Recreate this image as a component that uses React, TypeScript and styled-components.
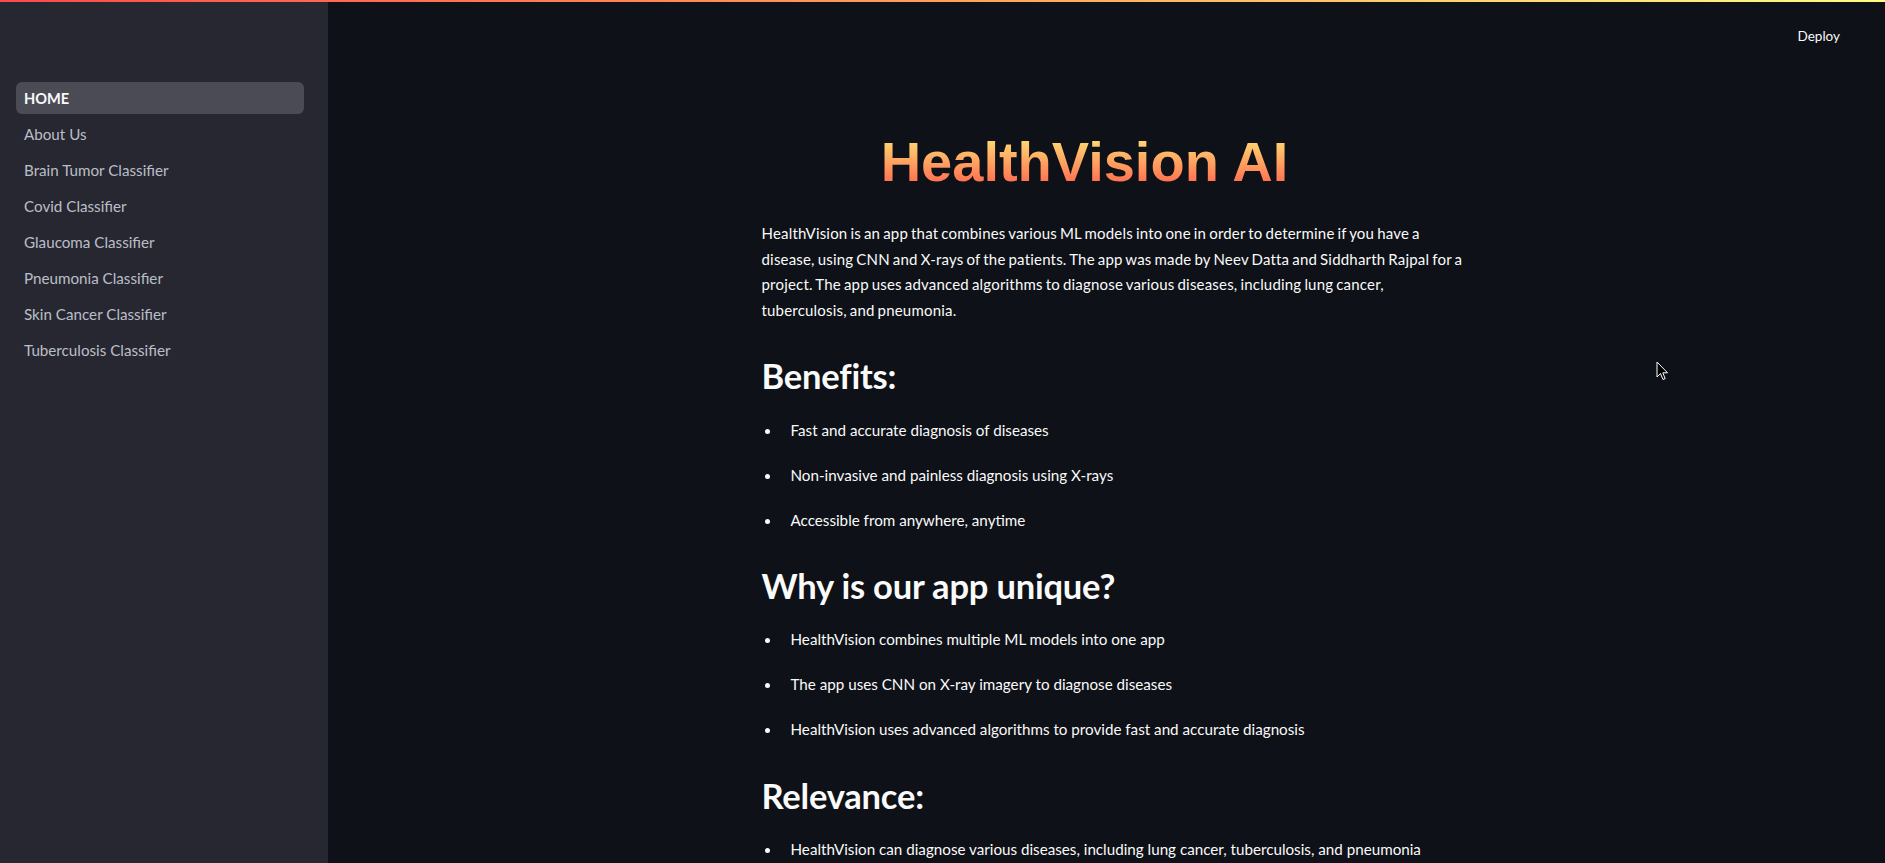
import React from "react";
import styled, { createGlobalStyle } from "styled-components";

const GlobalStyle = createGlobalStyle`
  html, body { margin: 0; padding: 0; background: #0e1117; }
  body { font-family: "Lato", "Noto Sans", sans-serif; color: #fafafa; overflow: hidden; }
  * { box-sizing: border-box; }
`;

const Page = styled.div`
  position: relative;
  display: flex;
  flex-direction: column;
  width: 100vw;
  height: 100vh;
  overflow: hidden;
`;

const Decoration = styled.div`
  height: 2px;
  flex: none;
  background: linear-gradient(90deg, #ff4b4b 0%, #ffa05a 50%, #fffd80 100%);
`;

const Body = styled.div`
  display: flex;
  flex: 1;
  min-height: 0;
`;

const Sidebar = styled.nav`
  width: 328px;
  flex: none;
  background: #262730;
  padding: 80px 24px 0 16px;
  display: flex;
  flex-direction: column;
  gap: 4px;
`;

const NavItem = styled.div<{ $active?: boolean }>`
  height: 32px;
  flex: none;
  display: flex;
  align-items: center;
  padding: 0 8px;
  border-radius: 6px;
  font-size: ${(p) => (p.$active ? "14.6px" : "15.2px")};
  background: ${(p) => (p.$active ? "#4a4b55" : "transparent")};
  color: ${(p) => (p.$active ? "#fafafa" : "rgba(236,240,250,0.76)")};
  font-weight: ${(p) => (p.$active ? 700 : 400)};
`;

const Main = styled.main`
  flex: 1;
  display: flex;
  flex-direction: column;
  padding-left: 14px;
  min-height: 0;
`;

const Header = styled.header`
  height: 58px;
  flex: none;
  display: flex;
  justify-content: flex-end;
  align-items: center;
  padding: 10px 45px 0 0;
`;

const DeployButton = styled.button`
  background: transparent;
  border: none;
  color: #fafafa;
  font-family: inherit;
  font-size: 13.5px;
  padding: 0;
  cursor: pointer;
`;

const Content = styled.div`
  width: 704px;
  flex: none;
  margin: 0 auto;
  display: flex;
  flex-direction: column;
`;

const Title = styled.h1`
  margin: 68px 58px 0 0;
  text-align: center;
  font-family: "Liberation Sans", Arial, sans-serif;
  font-weight: 700;
  font-size: 56px;
  line-height: 67px;
  background: linear-gradient(180deg, #ffd470 20%, #ff6b4f 85%);
  -webkit-background-clip: text;
  background-clip: text;
  color: transparent;
  align-self: center;
`;

const Paragraph = styled.p`
  margin: 26px 0 0 0;
  font-size: 15px;
  line-height: 25.6px;
  letter-spacing: 0.19px;
  word-spacing: -1px;
`;

const Heading = styled.h2`
  margin: 31px 0 0 0;
  font-size: 34.5px;
  font-weight: 700;
  line-height: 43.2px;
  letter-spacing: -0.2px;
`;

const List = styled.ul`
  margin: 20px 0 0 0;
  padding: 0 0 0 29px;
  list-style: none;
  display: flex;
  flex-direction: column;
  gap: 19.4px;
`;

const Item = styled.li`
  position: relative;
  font-size: 15.2px;
  line-height: 25.6px;

  &::before {
    content: "";
    position: absolute;
    left: -26px;
    top: 11px;
    width: 5px;
    height: 5px;
    border-radius: 50%;
    background: #fafafa;
  }
`;

const Cursor = styled.svg`
  position: absolute;
  left: 1656px;
  top: 361px;
  width: 12px;
  height: 20px;
`;

const navItems = [
  "HOME",
  "About Us",
  "Brain Tumor Classifier",
  "Covid Classifier",
  "Glaucoma Classifier",
  "Pneumonia Classifier",
  "Skin Cancer Classifier",
  "Tuberculosis Classifier",
];

const sections: { title: string; items: string[] }[] = [
  {
    title: "Benefits:",
    items: [
      "Fast and accurate diagnosis of diseases",
      "Non-invasive and painless diagnosis using X-rays",
      "Accessible from anywhere, anytime",
    ],
  },
  {
    title: "Why is our app unique?",
    items: [
      "HealthVision combines multiple ML models into one app",
      "The app uses CNN on X-ray imagery to diagnose diseases",
      "HealthVision uses advanced algorithms to provide fast and accurate diagnosis",
    ],
  },
  {
    title: "Relevance:",
    items: [
      "HealthVision can diagnose various diseases, including lung cancer, tuberculosis, and pneumonia",
    ],
  },
];

export default function App() {
  return (
    <Page>
      <GlobalStyle />
      <Decoration />
      <Body>
        <Sidebar>
          {navItems.map((n, i) => (
            <NavItem key={n} $active={i === 0}>
              {n}
            </NavItem>
          ))}
        </Sidebar>
        <Main>
          <Header>
            <DeployButton>Deploy</DeployButton>
          </Header>
          <Content>
            <Title>HealthVision AI</Title>
            <Paragraph>
              HealthVision is an app that combines various ML models into one in order to determine if you have a
              disease, using CNN and X-rays of the patients. The app was made by Neev Datta and Siddharth Rajpal for a
              project. The app uses advanced algorithms to diagnose various diseases, including lung cancer,
              tuberculosis, and pneumonia.
            </Paragraph>
            {sections.map((s) => (
              <React.Fragment key={s.title}>
                <Heading>{s.title}</Heading>
                <List>
                  {s.items.map((it) => (
                    <Item key={it}>{it}</Item>
                  ))}
                </List>
              </React.Fragment>
            ))}
          </Content>
        </Main>
      </Body>
      <Cursor viewBox="0 0 12 20">
        <path d="M1 1 L1 16 L4.5 12.5 L7 18.5 L9.2 17.6 L6.8 11.8 L11.5 11.8 Z" fill="#000" stroke="#fff" strokeWidth="1" strokeLinejoin="round" />
      </Cursor>
    </Page>
  );
}
